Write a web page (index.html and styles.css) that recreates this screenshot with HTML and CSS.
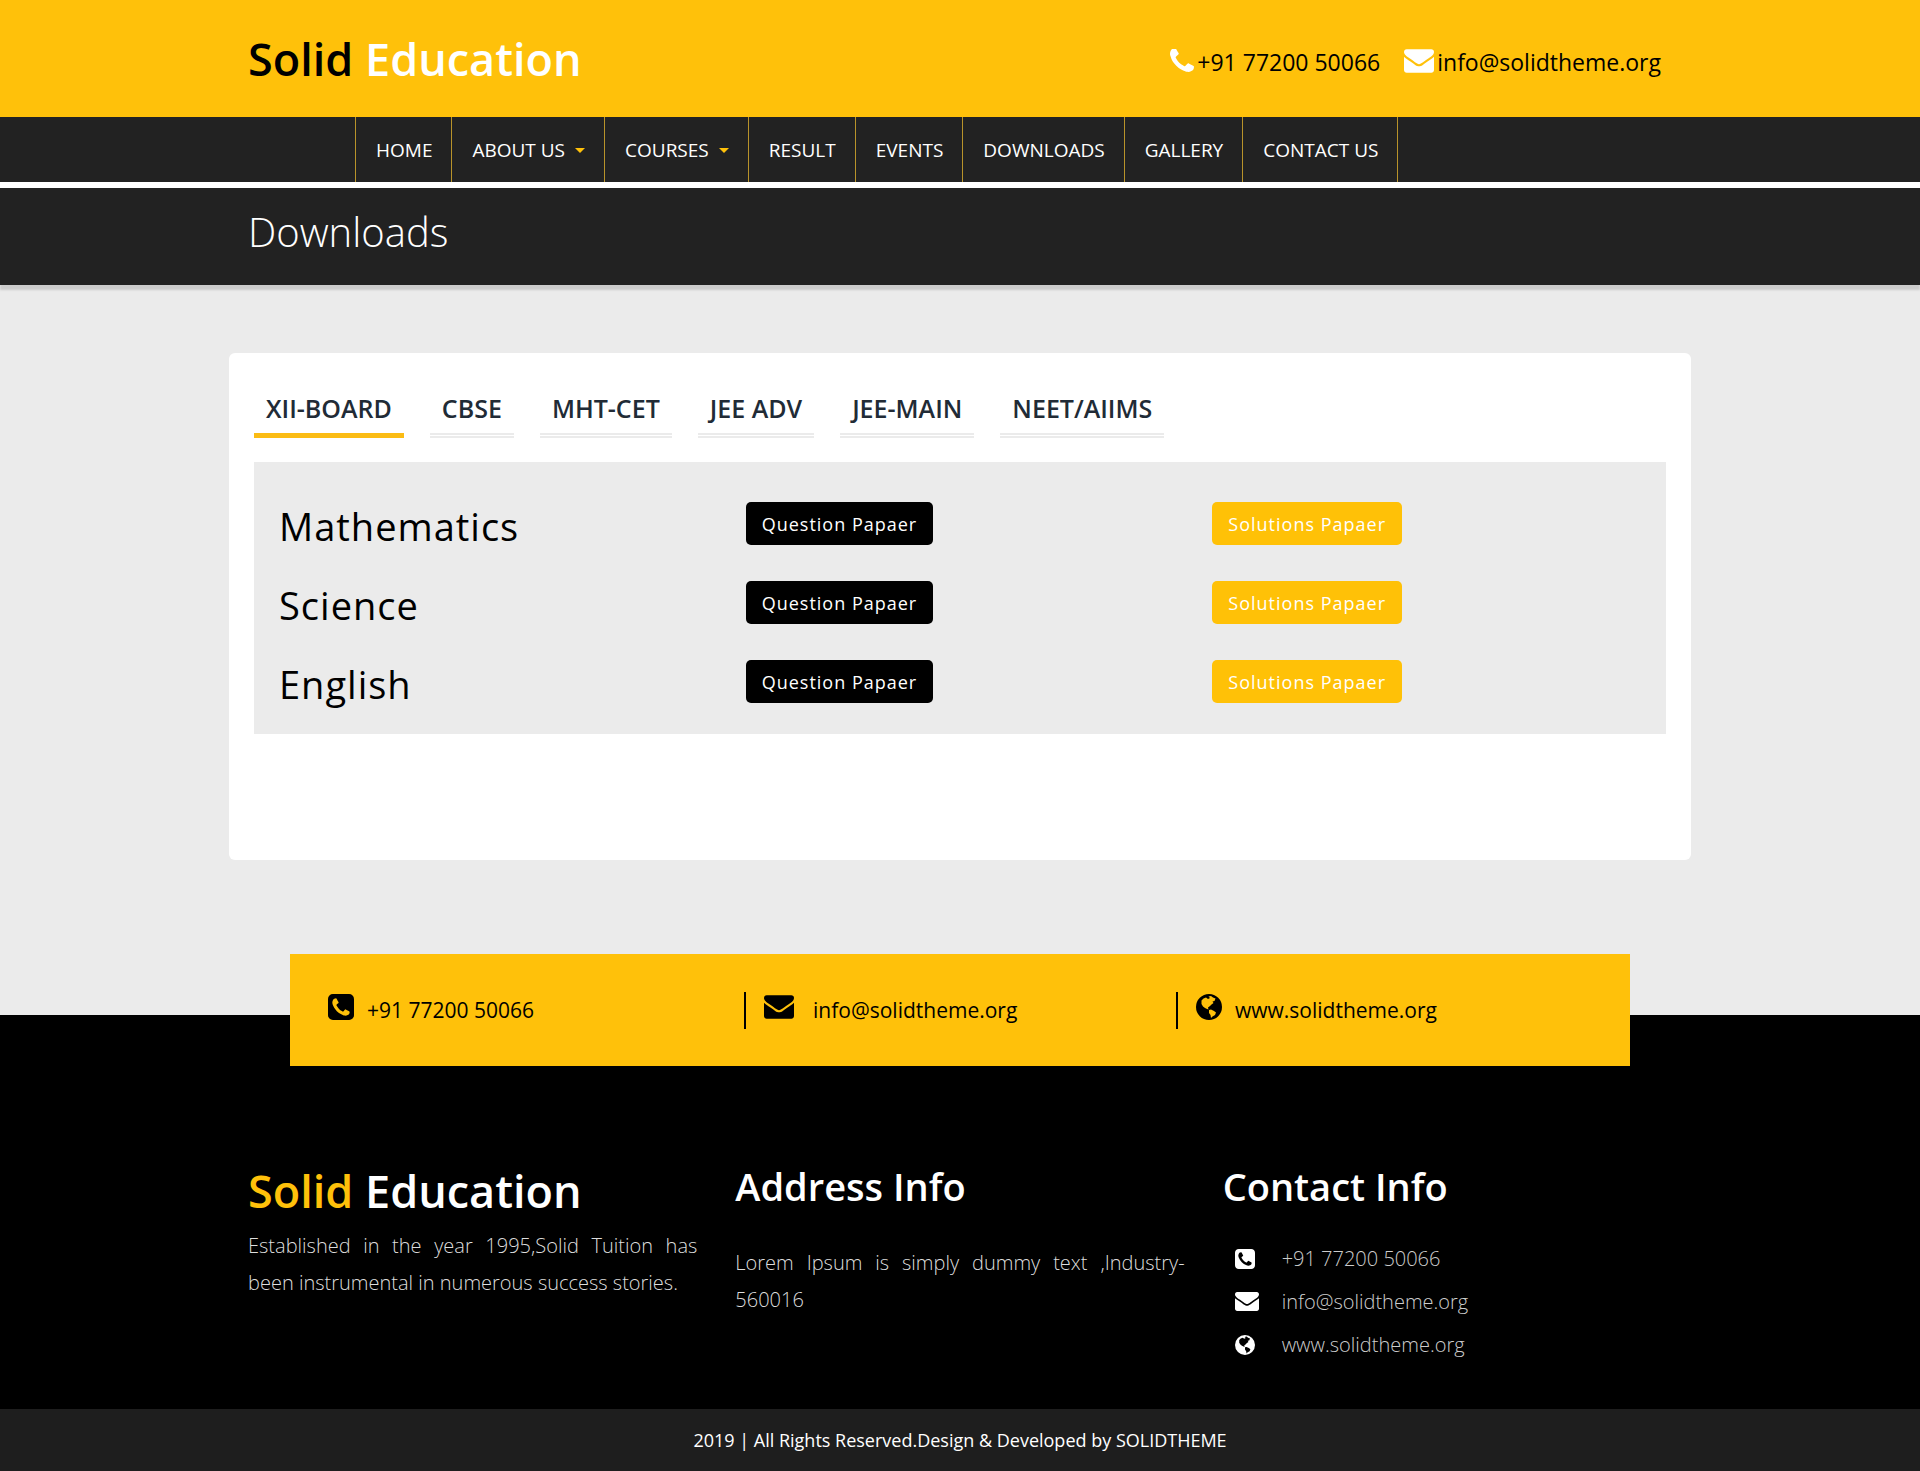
FILE: index.html
```html
<!DOCTYPE html>
<html lang="en">
<head>
<meta charset="utf-8">
<meta name="viewport" content="width=device-width, initial-scale=1">
<title>Solid Education - Downloads</title>
<link rel="stylesheet" href="styles.css">
</head>
<body>
<svg class="sprite" aria-hidden="true">
  <symbol id="i-phone" viewBox="192 192 1408 1408"><path d="M1600 1240q0 27-10 70.500t-21 68.500q-21 50-122 106-94 51-186 51-27 0-53-3.500t-57.500-12.500-47-14.500-55.500-20.500-49-18q-98-35-175-83-127-79-264-216t-216-264q-48-77-83-175-3-9-18-49t-20.500-55.500-14.500-47-12.500-57.500-3.500-53q0-92 51-186 56-101 106-122 25-11 68.500-21t70.500-10q14 0 21 3 18 6 53 76 11 19 30 54t35 63.500 31 53.500q3 4 17.500 25t21.500 35.500 7 28.500q0 20-28.500 50t-62 55-62 53-28.500 46q0 9 5 22.500t8.500 20.500 14 24 11.500 19q76 137 174 235t235 174q2 1 19 11.500t24 14 20.500 8.500 22.500 5q18 0 46-28.500t53-62 55-62 50-28.500q14 0 28.500 7t35.500 21.500 25 17.500q25 15 53.500 31t63.500 35 54 30q70 35 76 53 3 7 3 21z"/></symbol>
  <symbol id="i-phone-square" viewBox="128 128 1536 1536"><path d="M1408 1193q0-11-2-16t-18-16.500-40.500-25-47.500-26.500-45.500-25-28.500-15q-5-3-19-13t-25-15-21-5q-15 0-36.500 20.500t-39.500 45-38.500 45-33.500 20.500q-7 0-16.500-3.500t-15.500-6.500-17-9.500-14-8.500q-99-55-170-126.500t-127-170.500q-2-3-8.500-14t-9.500-17-6.500-15.500-3.500-16.500q0-13 20.500-33.500t45-38.500 45-39.500 20.500-36.500q0-10-5-21t-15-25-13-19q-3-6-15-28.500t-25-45.500-26.500-47.500-25-40.500-16.500-18-16-2q-48 0-101 22-46 21-80 94.500t-34 130.500q0 16 2.500 34t5 30.500 9 33 10 29.500 12.500 33 11 30q60 164 216.500 320.500t320.500 216.500q6 2 30 11t33 12.500 29.500 10 33 9 30.500 5 34 2.500q57 0 130.500-34t94.500-80q22-53 22-101zm256-777v960q0 119-84.500 203.500t-203.500 84.500h-960q-119 0-203.500-84.500t-84.500-203.500v-960q0-119 84.500-203.500t203.500-84.500h960q119 0 203.500 84.500t84.500 203.500z"/></symbol>
  <symbol id="i-envelope" viewBox="0 256 1792 1408"><path d="M1792 710v794q0 66-47 113t-113 47h-1472q-66 0-113-47t-47-113v-794q44 49 101 87 362 246 497 345 57 42 92.500 65.500t94.500 48 110 24.500h2q51 0 110-24.500t94.500-48 92.500-65.500q170-123 498-345 57-39 100-87zm0-294q0 79-49 151t-122 123q-376 261-468 325-10 7-42.500 30.500t-54 38-52 32.500-57.500 27-50 9h-2q-23 0-50-9t-57.500-27-52-32.500-54-38-42.500-30.500q-91-64-262-182.500t-205-142.500q-62-42-117-115.500t-55-136.500q0-78 41.500-130t118.500-52h1472q65 0 112.500 47t47.500 113z"/></symbol>
  <symbol id="i-globe" viewBox="0 0 26 26"><path fill-rule="evenodd" d="M13 0a13 13 0 1 1 0 26a13 13 0 1 1 0-26zM5.500 6.500L7.500 4.500L10 3.500L12 5L14 4L12.500 2.500L15 2L17 3.500L19.500 4.500L18.500 7L16.500 7.500L17.500 9L15.500 10.500L14 12L12 13.500L12.500 15.500L11 15L9 14L7 12.500L5.500 10zM13 16L15 15.500L18 17L20 18.500L19 21L16.500 22.500L15 24L14.500 21L13 19z"/></symbol>
</svg>

<header class="header">
  <div class="container header-row">
    <a class="brand" href="#">Solid <span>Education</span></a>
    <div class="header-contact">
      <a href="#"><svg class="ico-phone"><use href="#i-phone"/></svg>+91 77200 50066</a>
      <a href="#"><svg class="ico-mail"><use href="#i-envelope"/></svg>info@solidtheme.org</a>
    </div>
  </div>
</header>

<nav class="nav">
  <ul class="nav-list">
    <li><a href="#">HOME</a></li>
    <li><a href="#">ABOUT US<span class="caret"></span></a></li>
    <li><a href="#">COURSES<span class="caret"></span></a></li>
    <li><a href="#">RESULT</a></li>
    <li><a href="#">EVENTS</a></li>
    <li><a href="#">DOWNLOADS</a></li>
    <li><a href="#">GALLERY</a></li>
    <li><a href="#">CONTACT US</a></li>
  </ul>
</nav>

<div class="page-title">
  <div class="container"><h1>Downloads</h1></div>
</div>

<main class="main">
  <section class="card">
    <div class="tabs" role="tablist">
      <button type="button" role="tab" aria-selected="true" class="tab active">XII-BOARD</button>
      <button type="button" role="tab" class="tab">CBSE</button>
      <button type="button" role="tab" class="tab">MHT-CET</button>
      <button type="button" role="tab" class="tab">JEE ADV</button>
      <button type="button" role="tab" class="tab">JEE-MAIN</button>
      <button type="button" role="tab" class="tab">NEET/AIIMS</button>
    </div>
    <div class="panel" role="tabpanel">
      <div class="paper-row">
        <h2>Mathematics</h2>
        <div><button type="button" class="btn btn-dark">Question Papaer</button></div>
        <div><button type="button" class="btn btn-gold">Solutions Papaer</button></div>
      </div>
      <div class="paper-row">
        <h2>Science</h2>
        <div><button type="button" class="btn btn-dark">Question Papaer</button></div>
        <div><button type="button" class="btn btn-gold">Solutions Papaer</button></div>
      </div>
      <div class="paper-row">
        <h2>English</h2>
        <div><button type="button" class="btn btn-dark">Question Papaer</button></div>
        <div><button type="button" class="btn btn-gold">Solutions Papaer</button></div>
      </div>
    </div>
  </section>
</main>

<footer class="footer">
  <div class="strip">
    <a href="#"><svg class="ico-square"><use href="#i-phone-square"/></svg><span>+91 77200 50066</span></a>
    <a href="#" class="strip-mail"><svg class="ico-mail"><use href="#i-envelope"/></svg><span>info@solidtheme.org</span></a>
    <a href="#"><svg class="ico-square"><use href="#i-globe"/></svg><span>www.solidtheme.org</span></a>
  </div>
  <div class="container footer-cols">
    <div class="about">
      <a class="brand" href="#">Solid <span>Education</span></a>
      <p>Established in the year 1995,Solid Tuition has been instrumental in numerous success stories.</p>
    </div>
    <div class="address">
      <h3>Address Info</h3>
      <p>Lorem Ipsum is simply dummy text ,Industry-560016</p>
    </div>
    <div>
      <h3>Contact Info</h3>
      <ul class="contact-list">
        <li><span class="slot"><svg class="ico-small"><use href="#i-phone-square"/></svg></span><a href="#">+91 77200 50066</a></li>
        <li><span class="slot"><svg class="ico-small-mail"><use href="#i-envelope"/></svg></span><a href="#">info@solidtheme.org</a></li>
        <li><span class="slot"><svg class="ico-small"><use href="#i-globe"/></svg></span><a href="#">www.solidtheme.org</a></li>
      </ul>
    </div>
  </div>
  <div class="copyright">2019 | All Rights Reserved.Design &amp; Developed by SOLIDTHEME</div>
</footer>
</body>
</html>
```
FILE: styles.css
```css
* {
  box-sizing: border-box;
}

body {
  margin: 0;
  background: #ebebeb;
  color: #000;
  font-family: "Open Sans", "Noto Sans", sans-serif;
}

a {
  color: inherit;
  text-decoration: none;
}

h1,
h2,
h3,
p,
ul {
  margin: 0;
  padding: 0;
}

ul {
  list-style: none;
}

svg {
  display: block;
  flex: none;
  fill: currentColor;
}

.sprite {
  display: none;
}

.container {
  width: 100%;
  max-width: 1462px;
  margin: 0 auto;
  padding: 0 19px;
}

.brand {
  display: block;
  font-size: 45px;
  line-height: 60px;
  font-weight: 600;
}

.ico-phone { width: 24px; height: 24px; }
.ico-mail { width: 30px; height: 24px; }
.ico-square { width: 26px; height: 26px; }
.ico-small { width: 20px; height: 20px; }
.ico-small-mail { width: 24px; height: 19px; }

/* Header */
.header {
  background: #ffc10a;
}

.header-row {
  display: flex;
  flex-wrap: wrap;
  align-items: center;
  justify-content: space-between;
  min-height: 117px;
}

.header .brand span {
  color: #fff;
}

.header-contact {
  display: flex;
  gap: 24px;
  padding: 6px 11px 0 0;
  font-size: 23px;
  line-height: 32px;
}

.header-contact a {
  display: flex;
  align-items: center;
  gap: 3px;
}

.header-contact svg {
  margin-bottom: 2px;
  fill: #fff;
}

/* Navigation */
.nav {
  background: #222;
  border-bottom: 6px solid #fff;
}

.nav-list {
  display: flex;
  flex-wrap: wrap;
  width: 100%;
  max-width: 1210px;
  margin: 0 auto;
}

.nav-list li {
  border-right: 1px solid #b8932a;
}

.nav-list li:first-child {
  border-left: 1px solid #b8932a;
}

.nav-list a {
  display: flex;
  align-items: center;
  gap: 10px;
  padding: 1px 19px 0 20px;
  color: #fff;
  font-size: 19px;
  line-height: 64px;
}

.caret {
  border: 5px solid transparent;
  border-top-color: #ffc10a;
  border-bottom: 0;
}

/* Page title */
.page-title {
  padding: 14px 0 23px;
  background: #222;
  color: #fff;
  box-shadow: 0 5px 2px #ccc;
}

.page-title h1 {
  font-size: 40px;
  line-height: 60px;
  font-weight: 300;
}

/* Downloads card */
.main {
  padding: 68px 0 155px;
}

.card {
  max-width: 1462px;
  margin: 0 auto;
  padding: 38px 25px 126px;
  border-radius: 6px;
  background: #fff;
}

.tabs {
  display: flex;
  flex-wrap: wrap;
  gap: 26px;
  margin-bottom: 24px;
}

.tab {
  padding: 0 12px 8px;
  border: 0;
  border-bottom: 5px double #ebebeb;
  background: none;
  color: #212b36;
  font: 600 25px/34px "Open Sans", "Noto Sans", sans-serif;
}

.tab.active {
  border-bottom: 5px solid #fbbc14;
}

.panel {
  padding: 22px 6px 13px;
  background: #ebebeb;
}

.paper-row {
  display: grid;
  grid-template-columns: repeat(3, 1fr);
  align-items: center;
  min-height: 79px;
}

.paper-row > * {
  padding: 0 19px;
}

.paper-row h2 {
  padding-top: 5px;
  font-size: 38px;
  line-height: 52px;
  font-weight: 400;
  letter-spacing: 1px;
}

.btn {
  height: 43px;
  padding: 0 16px;
  border: 0;
  border-radius: 5px;
  color: #fff;
  font: 400 18px/24px "Open Sans", "Noto Sans", sans-serif;
  letter-spacing: 1px;
}

.btn-dark { background: #000; }
.btn-gold { background: #ffc107; }

/* Footer */
.footer {
  display: flow-root;
  background: #000;
  color: #fff;
}

.strip {
  display: grid;
  grid-template-columns: repeat(3, 1fr);
  align-items: center;
  width: 100%;
  max-width: 1340px;
  min-height: 112px;
  margin: -61px auto 0;
  padding: 0 22px;
  background: #ffc10a;
  color: #000;
  font-size: 21px;
  line-height: 37px;
}

.strip a {
  display: flex;
  align-items: center;
  gap: 13px;
  padding-left: 16px;
}

.strip a + a {
  padding-left: 18px;
  border-left: 2px solid #000;
}

.strip .strip-mail {
  gap: 19px;
}

.strip svg {
  margin-bottom: 6px;
}

.footer-cols {
  display: grid;
  grid-template-columns: repeat(3, 1fr);
  gap: 38px;
  padding-top: 94px;
  padding-bottom: 43px;
  font-size: 20px;
  line-height: 37px;
  font-weight: 300;
}

.footer .brand {
  color: #ffc10a;
}

.footer .brand span {
  color: #fff;
}

.footer-cols p {
  color: #ddd;
  text-align: justify;
}

.about {
  padding-top: 1px;
}

.about p {
  margin-top: 6px;
}

.footer-cols h3 {
  font-size: 38px;
  line-height: 52px;
  font-weight: 600;
}

.address p {
  margin-top: 32px;
}

.contact-list {
  margin-top: 25px;
  color: #ccc;
}

.contact-list li {
  display: flex;
  align-items: center;
  min-height: 43px;
  padding-left: 12px;
}

.slot {
  width: 47px;
  color: #fff;
}

.copyright {
  padding: 16px 0;
  background: #1e1e1e;
  font-size: 18px;
  line-height: 30px;
  text-align: center;
}
```
